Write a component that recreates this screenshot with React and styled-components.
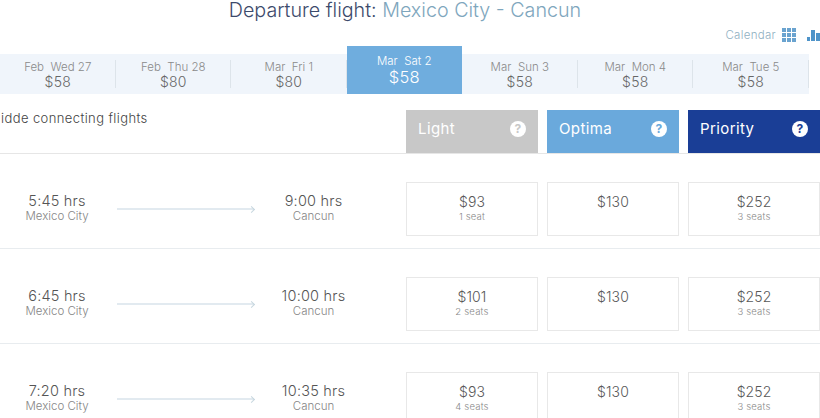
import React from "react";
import styled, { createGlobalStyle } from "styled-components";

const days = [
  { label: "Feb  Wed 27", price: "$58" },
  { label: "Feb  Thu 28", price: "$80" },
  { label: "Mar  Fri 1", price: "$80" },
  { label: "Mar  Sat 2", price: "$58", active: true },
  { label: "Mar  Sun 3", price: "$58" },
  { label: "Mar  Mon 4", price: "$58" },
  { label: "Mar  Tue 5", price: "$58" },
];

const plans = [
  { name: "Light", bg: "#c8c8c8" },
  { name: "Optima", bg: "#6aa9dc" },
  { name: "Priority", bg: "#1a3e96" },
];

const flights = [
  { from: "5:45 hrs", to: "9:00 hrs", fares: [["$93", "1 seat"], ["$130"], ["$252", "3 seats"]] },
  { from: "6:45 hrs", to: "10:00 hrs", fares: [["$101", "2 seats"], ["$130"], ["$252", "3 seats"]] },
  { from: "7:20 hrs", to: "10:35 hrs", fares: [["$93", "4 seats"], ["$130"], ["$252", "3 seats"]] },
];

const GlobalStyle = createGlobalStyle`
  html, body {
    margin: 0;
    background: #fff;
    overflow: hidden;
  }
  body {
    font-family: Inter, "Open Sans", sans-serif;
    font-weight: 300;
    color: #5a5a5a;
  }
`;

const Page = styled.div`
  width: 820px;
  height: 418px;
  overflow: hidden;
`;

const Title = styled.h1`
  margin: 0;
  height: 21px;
  font-size: 19.7px;
  line-height: 21px;
  font-weight: 300;
  text-align: center;
  padding-right: 10px;
  color: #3c4a6b;
  span {
    color: #7ea6bd;
  }
`;

const CalendarBar = styled.div`
  display: flex;
  justify-content: flex-end;
  align-items: center;
  gap: 6px;
  height: 25px;
  box-sizing: border-box;
  padding-top: 2px;
  font-size: 11.5px;
  letter-spacing: 0.3px;
  color: #8fb0c2;
`;

const Icons = styled.span`
  display: inline-flex;
  align-items: center;
  gap: 11px;
`;

const Strip = styled.div`
  display: flex;
  align-items: flex-end;
  width: 810px;
  height: 48px;
`;

const Day = styled.div`
  width: 115.5px;
  height: ${(p) => (p.$active ? "48px" : "40px")};
  box-sizing: border-box;
  padding-top: ${(p) => (p.$active ? "1px" : "2px")};
  display: flex;
  flex-direction: column;
  align-items: center;
  justify-content: center;
  background: ${(p) => (p.$active ? "#6fadde" : "#f0f5fb")};
  color: ${(p) => (p.$active ? "#fff" : "#666")};
  position: relative;
  &::after {
    content: "";
    display: ${(p) => (p.$active ? "none" : "block")};
    position: absolute;
    right: 0;
    top: 6px;
    bottom: 6px;
    width: 1px;
    background: #dde4ea;
  }
`;

const DayLabel = styled.span`
  font-size: 11.5px;
  line-height: 14px;
  white-space: pre;
  color: ${(p) => (p.$active ? "#fff" : "#8a8a8a")};
`;

const DayPrice = styled.span`
  font-size: ${(p) => (p.$active ? "16.5px" : "14px")};
  line-height: ${(p) => (p.$active ? "19px" : "16px")};
  letter-spacing: 0.2px;
`;

const HeaderRow = styled.div`
  display: flex;
  margin-top: 16px;
  height: 43px;
  border-bottom: 1px solid #e6e6e6;
`;

const Hide = styled.div`
  flex: 1;
  margin-left: -9px;
  margin-top: -1px;
  font-size: 13px;
  line-height: 18px;
  font-weight: 300;
  letter-spacing: 0.4px;
  color: #444;
`;

const Plans = styled.div`
  display: grid;
  grid-template-columns: repeat(3, 132px);
  column-gap: 9px;
`;

const Plan = styled.div`
  display: flex;
  align-items: center;
  justify-content: space-between;
  padding: 0 12px 6px 12px;
  background: ${(p) => p.$bg};
  color: #fff;
  font-size: 15px;
  font-weight: 400;
  letter-spacing: 0.4px;
`;

const Help = styled.span`
  width: 16px;
  height: 16px;
  border-radius: 50%;
  background: #fff;
  color: ${(p) => p.$bg};
  font-size: 12px;
  font-weight: 700;
  line-height: 16px;
  text-align: center;
`;

const Row = styled.div`
  display: flex;
  height: 95px;
  padding-top: 28px;
  box-sizing: border-box;
  border-bottom: 1px solid #e8ecef;
`;

const Route = styled.div`
  flex: 1;
  display: flex;
  align-items: flex-start;
  padding-top: 11px;
`;

const Point = styled.div`
  width: ${(p) => p.$w}px;
  text-align: center;
  flex: none;
`;

const Time = styled.div`
  font-size: 14.5px;
  line-height: 16px;
  letter-spacing: 0.2px;
  color: #555;
`;

const City = styled.div`
  margin-top: 1px;
  font-size: 11.5px;
  line-height: 13px;
  color: #858585;
`;

const Arrow = styled.div`
  width: 137px;
  height: 2px;
  margin: 15px 0 0 3px;
  background: #e2eaf0;
  position: relative;
  flex: none;
  &::after {
    content: "";
    position: absolute;
    right: 0;
    top: -1px;
    width: 4px;
    height: 4px;
    border-top: 1px solid #c6d6df;
    border-right: 1px solid #c6d6df;
    transform: rotate(45deg);
  }
`;

const Fares = styled.div`
  display: grid;
  grid-template-columns: repeat(3, 132px);
  column-gap: 9px;
`;

const Fare = styled.div`
  height: 54px;
  box-sizing: border-box;
  padding-top: 10px;
  border: 1px solid #e8e8e8;
  text-align: center;
`;

const Price = styled.div`
  font-size: 14px;
  line-height: 17px;
  letter-spacing: 0.1px;
  color: #585858;
`;

const Seats = styled.div`
  margin-top: 1px;
  font-size: 9.5px;
  line-height: 12px;
  letter-spacing: 0.2px;
  color: #888;
`;

const GridIcon = () => (
  <svg width="14" height="14" viewBox="0 0 14 14" fill="#6aa3cf">
    {[0, 5, 10].map((y) =>
      [0, 5, 10].map((x) => <rect key={`${x}${y}`} x={x} y={y} width="4" height="4" />)
    )}
  </svg>
);

const BarsIcon = () => (
  <svg width="13" height="12" viewBox="0 0 13 12" fill="#4f94c9">
    <rect x="0" y="8" width="3" height="4" />
    <rect x="4" y="1" width="4" height="11" />
    <rect x="9" y="4" width="4" height="8" />
  </svg>
);

export default function App() {
  return (
    <Page>
      <GlobalStyle />
      <Title>
        Departure flight: <span>Mexico City - Cancun</span>
      </Title>
      <CalendarBar>
        Calendar
        <Icons>
          <GridIcon />
          <BarsIcon />
        </Icons>
      </CalendarBar>
      <Strip>
        {days.map((d) => (
          <Day key={d.label} $active={d.active}>
            <DayLabel $active={d.active}>{d.label}</DayLabel>
            <DayPrice $active={d.active}>{d.price}</DayPrice>
          </Day>
        ))}
      </Strip>
      <HeaderRow>
        <Hide>Hidde connecting flights</Hide>
        <Plans>
          {plans.map((p) => (
            <Plan key={p.name} $bg={p.bg}>
              {p.name}
              <Help $bg={p.bg}>?</Help>
            </Plan>
          ))}
        </Plans>
      </HeaderRow>
      {flights.map((f) => (
        <Row key={f.from}>
          <Route>
            <Point $w={114}>
              <Time>{f.from}</Time>
              <City>Mexico City</City>
            </Point>
            <Arrow />
            <Point $w={119}>
              <Time>{f.to}</Time>
              <City>Cancun</City>
            </Point>
          </Route>
          <Fares>
            {f.fares.map(([price, seats], i) => (
              <Fare key={i}>
                <Price>{price}</Price>
                {seats && <Seats>{seats}</Seats>}
              </Fare>
            ))}
          </Fares>
        </Row>
      ))}
    </Page>
  );
}
